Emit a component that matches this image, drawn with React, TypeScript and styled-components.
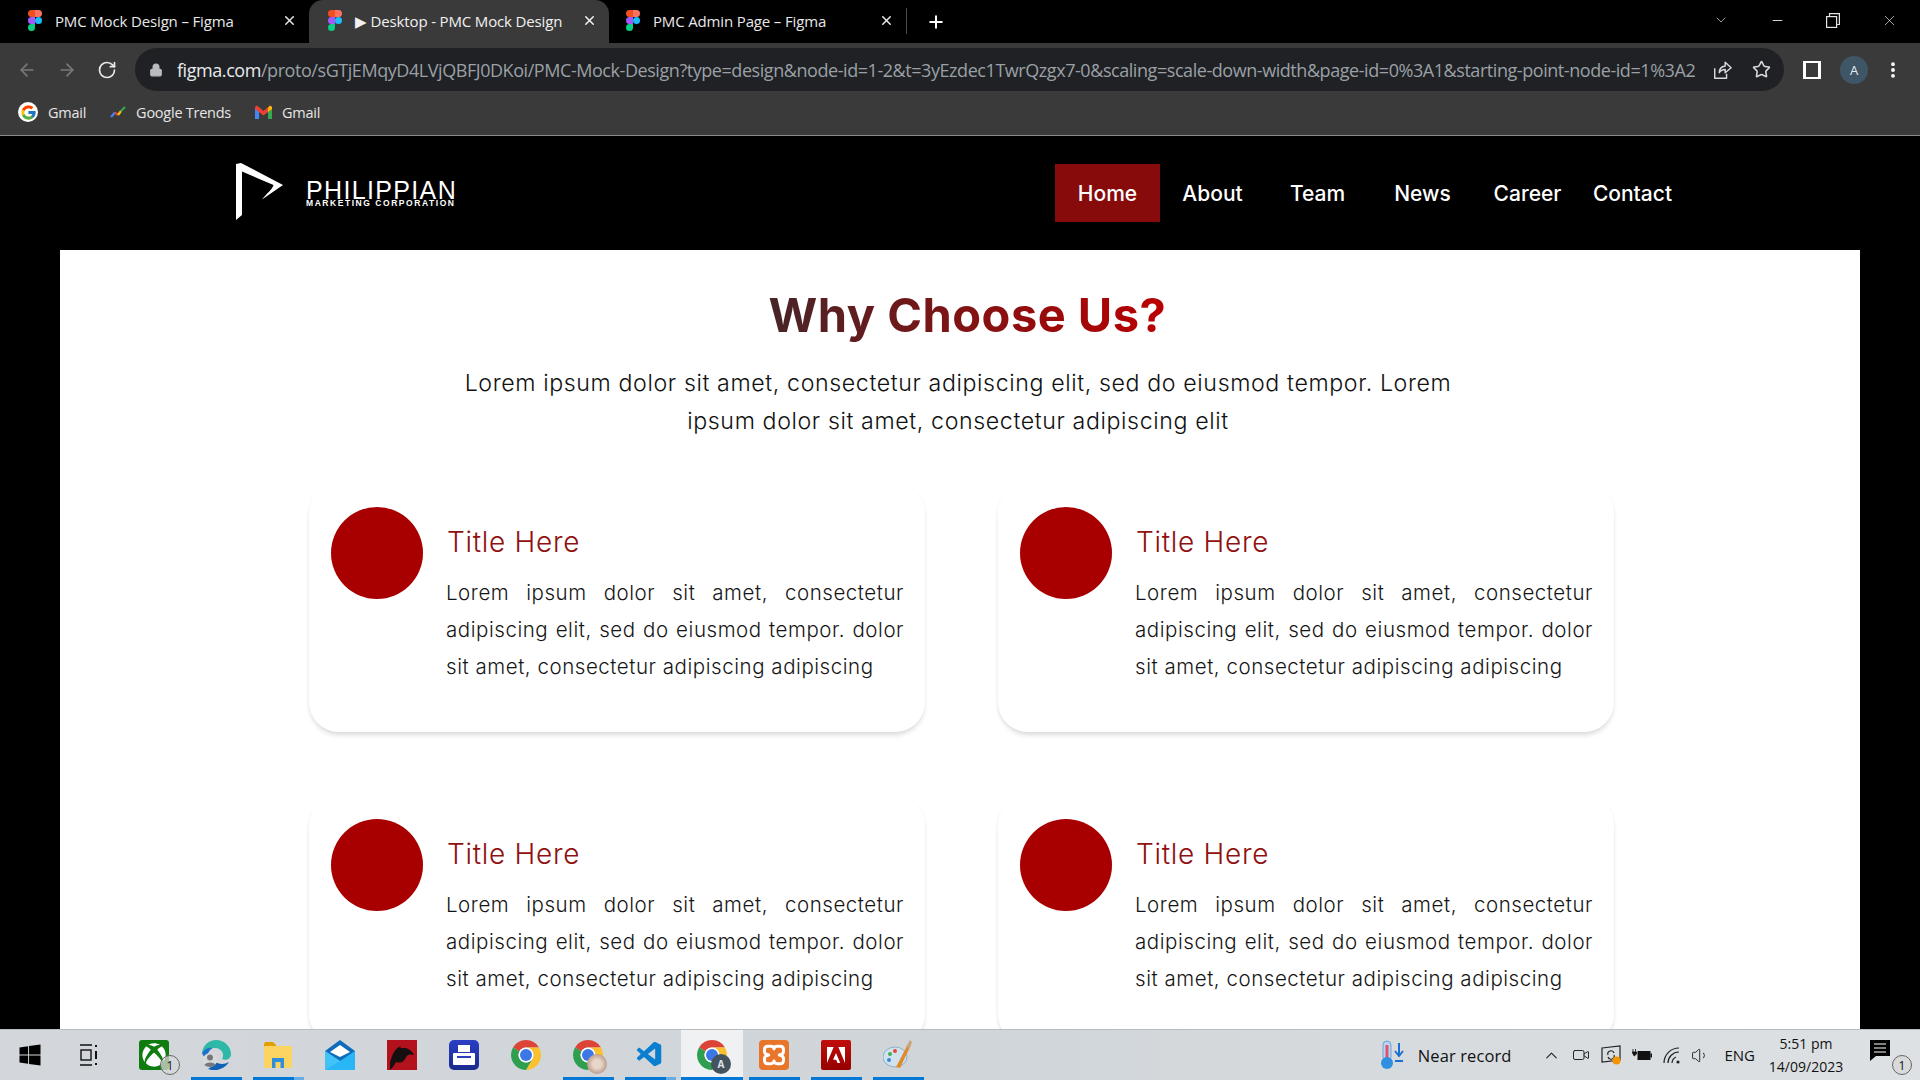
import React from "react";
import styled, { createGlobalStyle } from "styled-components";
import {
  ArrowLeft,
  ArrowRight,
  ChevronDown,
  ChevronUp,
  Lock,
  Minus,
  MoreVertical,
  Plus,
  RotateCw,
  Star,
  Video,
  Volume1,
  X,
} from "lucide-react";
import { FaWindows, FaXbox } from "react-icons/fa";
import { FcGoogle } from "react-icons/fc";
import { SiAdobe } from "react-icons/si";
import { VscVscode } from "react-icons/vsc";

const GlobalStyle = createGlobalStyle`
  html, body {
    margin: 0;
    padding: 0;
    height: 100%;
    overflow: hidden;
    background: #000;
  }
  * {
    box-sizing: border-box;
  }
`;

const Screen = styled.div`
  width: 1920px;
  height: 1080px;
  display: flex;
  flex-direction: column;
  overflow: hidden;
  font-family: "Open Sans", "Liberation Sans", sans-serif;
`;

/* browser chrome */
const TabStrip = styled.div`
  height: 43px;
  flex: none;
  display: flex;
  background: #000;
  color: #fff;
`;

const Tab = styled.div<{ $active?: boolean; $width: number; $inset: number }>`
  width: ${(p) => p.$width}px;
  height: 43px;
  display: flex;
  align-items: center;
  padding: 0 12px 2px ${(p) => p.$inset}px;
  font-size: 15px;
  letter-spacing: -0.15px;
  background: ${(p) => (p.$active ? "#3a3a3a" : "transparent")};
  border-radius: ${(p) => (p.$active ? "14px 14px 0 0" : "0")};
  color: ${(p) => (p.$active ? "#f1f1f1" : "#e8e8e8")};
`;

const TabTitle = styled.span`
  flex: 1;
  margin-left: 13px;
  white-space: nowrap;
`;

const Divider = styled.div`
  width: 1px;
  height: 26px;
  margin: 8px 0 0 0;
  background: #4a4a4a;
`;

const NewTab = styled.div`
  width: 58px;
  display: flex;
  align-items: center;
  justify-content: center;
`;

const WindowControls = styled.div`
  margin-left: auto;
  display: flex;
  align-items: center;
  padding: 0 22px 3px 0;
  gap: 41px;
  color: #e4e4e4;
`;

const Toolbar = styled.div`
  height: 54px;
  flex: none;
  display: flex;
  align-items: center;
  background: #3a3a3a;
  padding: 5px 0 6px 17px;
  color: #b9bcc0;
`;

const NavIcons = styled.div`
  width: 118px;
  display: flex;
  gap: 20px;
`;

const AddressBar = styled.div`
  width: 1649px;
  height: 43px;
  display: flex;
  align-items: center;
  border-radius: 22px;
  background: #202124;
  padding: 0 13px 0 14px;
`;

const Url = styled.div`
  margin-left: 14px;
  width: 1518px;
  overflow: hidden;
  white-space: nowrap;
  font-size: 18px;
  letter-spacing: -0.44px;
  color: #9aa0a6;
  & b {
    font-weight: 400;
    color: #e8eaed;
  }
`;

const BarActions = styled.div`
  margin-left: 17px;
  display: flex;
  gap: 20px;
  color: #d7d9dc;
`;

const ProfileActions = styled.div`
  display: flex;
  align-items: center;
  margin-left: 19px;
  color: #fff;
`;

const PanelIcon = styled.div`
  width: 18px;
  height: 18px;
  border: 2px solid #fff;
  border-left-width: 3px;
  border-right-width: 3px;
  background: #3a3a3a;
`;

const Avatar = styled.div`
  width: 28px;
  height: 28px;
  margin-left: 19px;
  border-radius: 50%;
  background: #3e5666;
  display: flex;
  align-items: center;
  justify-content: center;
  font-size: 13px;
  color: #e6edf2;
`;

const MenuDots = styled.div`
  margin-left: 15px;
  display: flex;
`;

const Bookmarks = styled.div`
  height: 39px;
  flex: none;
  display: flex;
  align-items: center;
  background: #3a3a3a;
  border-bottom: 1px solid #8a8a8a;
  padding: 0 0 8px 18px;
  font-size: 14.5px;
  letter-spacing: -0.25px;
  color: #e6e6e6;
`;

const Bookmark = styled.div`
  display: flex;
  align-items: center;
  gap: 10px;
  margin-right: 24px;
`;

const GoogleDisc = styled.div`
  width: 20px;
  height: 20px;
  border-radius: 50%;
  background: #fff;
  display: flex;
  align-items: center;
  justify-content: center;
`;

/* the page in the browser */
const Viewport = styled.div`
  flex: 1;
  min-height: 0;
  overflow: hidden;
  background: #000;
`;

const SiteHeader = styled.header`
  height: 114px;
  display: flex;
  align-items: flex-start;
  padding: 27px 235px 0 236px;
`;

const Logo = styled.div`
  display: flex;
  align-items: flex-start;
  gap: 22px;
  color: #fff;
`;

const LogoWords = styled.div`
  padding-top: 17px;
  display: flex;
  flex-direction: column;
  font-family: "Liberation Sans", Arial, sans-serif;
`;

const LogoName = styled.span`
  font-size: 25px;
  line-height: 20px;
  letter-spacing: 1.35px;
`;

const LogoSub = styled.span`
  margin-top: -1px;
  font-size: 8.5px;
  line-height: 8px;
  font-weight: 700;
  letter-spacing: 1.55px;
  white-space: nowrap;
`;

const SiteNav = styled.nav`
  margin-left: auto;
  margin-top: 1px;
  display: grid;
  grid-template-columns: repeat(6, 105px);
`;

const NavLink = styled.a<{ $active?: boolean }>`
  height: 58px;
  display: flex;
  align-items: center;
  justify-content: center;
  font-family: Inter, "Liberation Sans", sans-serif;
  font-size: 21px;
  font-weight: 500;
  color: #fff;
  background: ${(p) => (p.$active ? "#860b0a" : "transparent")};
`;

const Panel = styled.main`
  margin: 0 60px;
  background: #fff;
  padding-top: 37px;
  min-height: 900px;
  font-family: Inter, "Liberation Sans", sans-serif;
`;

const Heading = styled.h1`
  margin: 0;
  padding-left: 15px;
  text-align: center;
  font-size: 47px;
  line-height: 56px;
  font-weight: 700;
  letter-spacing: 0.5px;
`;

const GradientText = styled.span`
  background: linear-gradient(90deg, #472527 0%, #bb0000 100%);
  -webkit-background-clip: text;
  background-clip: text;
  color: transparent;
`;

const Lead = styled.p`
  width: 1020px;
  margin: 22px auto 0;
  padding-right: 4px;
  text-align: center;
  font-size: 23.2px;
  font-weight: 360;
  line-height: 37.5px;
  letter-spacing: 0.6px;
  color: #111;
`;

const CardGrid = styled.div`
  margin-top: 43px;
  padding-left: 249px;
  display: grid;
  grid-template-columns: repeat(2, 616px);
  column-gap: 73px;
  row-gap: 63px;
`;

const Card = styled.article`
  display: grid;
  grid-template-columns: 92px 1fr;
  column-gap: 24px;
  height: 249px;
  padding: 24px 21px 0 22px;
  border-radius: 30px;
  background: #fff;
  box-shadow: 0 4px 5px -1px rgba(0, 0, 0, 0.14), 0 0 4px rgba(0, 0, 0, 0.02);
`;

const Dot = styled.div`
  width: 92px;
  height: 92px;
  border-radius: 50%;
  background: #a80000;
`;

const CardTitle = styled.h2`
  margin: 18px 0 0;
  font-size: 28px;
  line-height: 34px;
  font-weight: 300;
  letter-spacing: 0.7px;
  color: #8f1010;
`;

const CardText = styled.p`
  margin: 14.5px 0 0 -1px;
  font-size: 20.5px;
  font-weight: 360;
  line-height: 37.4px;
  letter-spacing: 0.55px;
  text-align: justify;
  color: #151515;
`;

/* windows taskbar */
const Taskbar = styled.footer`
  height: 51px;
  flex: none;
  display: flex;
  align-items: stretch;
  background: linear-gradient(90deg, #d3d7db 0%, #d0d5d9 50%, #dde1e4 100%);
  border-top: 1px solid #b9bcbf;
  color: #111;
`;

const StartSlot = styled.div`
  width: 59px;
  display: flex;
  align-items: center;
  justify-content: center;
  color: #000;
`;

const TaskViewSlot = styled(StartSlot)`
  margin-right: 5px;
`;

const TaskSlot = styled.div<{ $running?: boolean; $focus?: boolean; $stack?: boolean }>`
  position: relative;
  width: 62px;
  display: flex;
  align-items: center;
  justify-content: center;
  background: ${(p) => (p.$focus ? "#f0f1f2" : "transparent")};

  &::after {
    content: "";
    display: ${(p) => (p.$running ? "block" : "none")};
    position: absolute;
    left: ${(p) => (p.$focus ? "0" : "6px")};
    right: ${(p) => (p.$focus ? "0" : "5px")};
    bottom: 0;
    height: 3px;
    background: ${(p) =>
      p.$stack
        ? "linear-gradient(90deg, #0078d7 0 80%, #66ade6 80%)"
        : "#0078d7"};
  }
`;

const IconBox = styled.div`
  position: relative;
  width: 30px;
  height: 30px;
  display: flex;
  align-items: center;
  justify-content: center;
`;

const XboxTile = styled(IconBox)`
  background: #107c10;
  border-radius: 3px;
  color: #fff;
`;

const ScanTile = styled(IconBox)`
  background: linear-gradient(180deg, #2b3fc4, #1a2a8c);
  border-radius: 5px;
`;

const XamppTile = styled(IconBox)`
  background: #e8752a;
  border-radius: 4px;
`;

const AcrobatTile = styled(IconBox)`
  background: linear-gradient(180deg, #c00d0d, #960000);
  border-radius: 2px;
  color: #fff;
`;

const CountBadge = styled.div`
  position: absolute;
  right: -11px;
  bottom: -5px;
  width: 20px;
  height: 20px;
  border-radius: 50%;
  border: 1px solid #666;
  background: rgba(215, 215, 215, 0.75);
  display: flex;
  align-items: center;
  justify-content: center;
  font-size: 12px;
  color: #111;
`;

const ProfileBadge = styled.div<{ $photo?: boolean }>`
  position: absolute;
  right: -4px;
  bottom: -4px;
  width: 20px;
  height: 20px;
  border-radius: 50%;
  background: ${(p) =>
    p.$photo ? "radial-gradient(circle, #e8d6c8 30%, #9a7464 100%)" : "#44535f"};
  color: #dfe6ea;
  font-size: 10px;
  font-weight: 700;
  display: flex;
  align-items: center;
  justify-content: center;
`;

const Tray = styled.div`
  margin-left: auto;
  display: flex;
  align-items: center;
  padding-right: 19px;
`;

const Weather = styled.div`
  display: flex;
  align-items: center;
  gap: 14px;
  font-size: 16.5px;
  letter-spacing: 0.1px;
  margin-right: 31px;
  white-space: nowrap;
`;

const TrayIcons = styled.div`
  display: flex;
  align-items: center;
  gap: 11px;
  color: #222;
`;

const Lang = styled.div`
  margin-left: 14px;
  font-size: 15px;
`;

const Clock = styled.div`
  width: 100px;
  margin-left: 1px;
  display: flex;
  flex-direction: column;
  align-items: center;
  font-size: 14px;
  line-height: 23px;
  white-space: nowrap;
`;

const Notify = styled.div`
  position: relative;
  margin-left: 14px;
  width: 31px;
  height: 30px;
`;

const FigmaIcon = () => (
  <svg width="14" height="21" viewBox="0 0 14 21">
    <path d="M0 3.5A3.5 3.5 0 0 1 3.5 0H7v7H3.5A3.5 3.5 0 0 1 0 3.5Z" fill="#f24e1e" />
    <path d="M7 0h3.5a3.5 3.5 0 0 1 0 7H7Z" fill="#ff7262" />
    <path d="M0 10.5A3.5 3.5 0 0 1 3.5 7H7v7H3.5A3.5 3.5 0 0 1 0 10.5Z" fill="#a259ff" />
    <circle cx="10.5" cy="10.5" r="3.5" fill="#1abcfe" />
    <path d="M0 17.5A3.5 3.5 0 0 1 3.5 14H7v3.5a3.5 3.5 0 0 1-7 0Z" fill="#0acf83" />
  </svg>
);

const RestoreIcon = () => (
  <svg width="14" height="15" viewBox="0 0 14 15" fill="none" stroke="currentColor" strokeWidth="1.2">
    <rect x="0.6" y="3.6" width="10" height="10.8" />
    <path d="M3.5 3.5V0.6H13.4V11.5H10.6" />
  </svg>
);

const ShareIcon = () => (
  <svg width="20" height="20" viewBox="0 0 22 22" fill="none" stroke="currentColor" strokeWidth="1.6" strokeLinejoin="round">
    <path d="M3 9V20H16V15" />
    <path d="M8 14C8 9 11 7 14.5 6.5V2.5L21 8.5L14.5 14V10.5C12 10.5 9.5 11.5 8 14Z" />
  </svg>
);

const LogoMark = () => (
  <svg width="48" height="58" viewBox="0 0 48 58">
    <path
      d="M0 1L5 0L47 22L26 36.5C31 30 36 27 37.5 22L6 8.5V52L0 57Z"
      fill="#fff"
    />
  </svg>
);

const ChromeIcon = () => (
  <svg width="30" height="30" viewBox="4 4 40 40">
    <path d="M24 4A20 20 0 0 1 41.32 14H24A10 10 0 0 0 15.34 19L6.68 14A20 20 0 0 1 24 4Z" fill="#db4437" />
    <path d="M41.32 14A20 20 0 0 1 24 44L32.66 29A10 10 0 0 0 24 14H41.32Z" fill="#fbc02d" />
    <path d="M24 44A20 20 0 0 1 6.68 14L15.34 19A10 10 0 0 0 32.66 29Z" fill="#2e9e4f" />
    <circle cx="24" cy="24" r="10" fill="#fff" />
    <circle cx="24" cy="24" r="8" fill="#3b78e7" />
  </svg>
);

const TrendsIcon = () => (
  <svg width="16" height="14" viewBox="0 0 16 14" fill="none" strokeWidth="2.2">
    <path d="M1 12L5 7.5" stroke="#4285f4" />
    <path d="M5 7.5L8 10" stroke="#ea4335" />
    <path d="M8 10L11 6" stroke="#fbbc04" />
    <path d="M11 6L15 2" stroke="#34a853" />
  </svg>
);

const GmailIcon = () => (
  <svg width="17" height="14" viewBox="0 0 17 14">
    <path d="M0 2V14H4V6Z" fill="#4285f4" />
    <path d="M17 2V14H13V6Z" fill="#34a853" />
    <path d="M0 2L2 0.5L8.5 6L15 0.5L17 2V4L8.5 10.5L0 4Z" fill="#ea4335" />
    <path d="M15 0.5L17 2V4L13 7V3Z" fill="#fbbc04" />
  </svg>
);

const EdgeIcon = () => (
  <svg width="30" height="30" viewBox="0 0 30 30">
    <path d="M1 13C2 5 8 0 15 0C24 0 30 7 30 14C30 19 25 21 21 19C24 15 21 8 14 8C8 8 3 10 1 13Z" fill="#2fb8a8" />
    <path d="M1 13C3 9 8 7 12 8C8 10 6 14 7 18C4 18 2 16 1 13Z" fill="#1b73c8" />
    <path d="M7 29C14 32 24 29 28 22C23 25 17 24 14 22C13 25 10 27 7 29Z" fill="#0f62b5" />
    <circle cx="9" cy="20" r="7" fill="#d7d9dc" />
    <circle cx="9" cy="17.5" r="3" fill="#777" />
    <path d="M3.5 25C4 21.5 14 21.5 14.5 25C12 27.5 6 27.5 3.5 25Z" fill="#777" />
  </svg>
);

const FilesIcon = () => (
  <svg width="28" height="28" viewBox="0 0 28 28">
    <path d="M0 5V2.5L1.5 1H9L12 4V7H0Z" fill="#e0a100" />
    <rect x="0" y="5" width="28" height="22" rx="1" fill="#fcd462" />
    <path d="M8 27V17H20V27H16.5V21H11.5V27Z" fill="#2f8fdc" />
  </svg>
);

const MailIcon = () => (
  <svg width="30" height="30" viewBox="0 0 30 30">
    <path d="M0 11L15 0L30 11V30H0Z" fill="#0f6cbd" />
    <path d="M5 12L15 5L25 12L15 17Z" fill="#fff" />
    <path d="M0 11L15 21L30 11V30H0Z" fill="#29b6f6" />
    <path d="M0 11L15 21L0 30Z" fill="#42c3f7" />
  </svg>
);

const MsiIcon = () => (
  <svg width="30" height="30" viewBox="0 0 30 30">
    <rect width="30" height="30" fill="#b3121d" />
    <path d="M3 23C5 15 7 9 14 6C12 8 14 8 18 8C21 8 25 11 27 15C23 14 21 14 19 17C18 20 15 24 9 22C7 26 5 28 3 30Z" fill="#15100f" />
  </svg>
);

const ScanIcon = () => (
  <svg width="22" height="20" viewBox="0 0 22 20" fill="#fff">
    <rect x="5" y="0" width="12" height="7" />
    <rect x="0" y="8" width="22" height="12" rx="1" />
    <rect x="4" y="11" width="14" height="2" fill="#2b3fc4" />
  </svg>
);

const XamppIcon = () => (
  <svg width="26" height="26" viewBox="0 0 30 30" fill="none" stroke="#fff" strokeWidth="3.4" strokeLinejoin="round">
    <path d="M8 5h3q4 0 4 3q0-3 4-3h3q4 0 4 4v2q0 3-5 4q5 1 5 4v2q0 4-4 4h-3q-4 0-4-3q0 3-4 3h-3q-4 0-4-4v-2q0-3 5-4q-5-1-5-4v-2q0-4 4-4Z" />
  </svg>
);

const PaintIcon = () => (
  <svg width="30" height="30" viewBox="0 0 30 30">
    <ellipse cx="12" cy="17" rx="12" ry="10" fill="#cfe2ee" stroke="#8eb0c6" />
    <circle cx="7" cy="14" r="2" fill="#46b04a" />
    <circle cx="12" cy="11" r="2" fill="#e2483b" />
    <circle cx="6" cy="20" r="2" fill="#3a87d8" />
    <path d="M13 27L24 6L27 7L17 28Z" fill="#e08a2c" />
    <path d="M23 7L27 0L29 2L27 8Z" fill="#c9a77a" />
  </svg>
);

const ThermoIcon = () => (
  <svg width="24" height="30" viewBox="0 0 24 30">
    <rect x="3" y="1" width="8" height="20" rx="4" fill="#b9d3ee" stroke="#6aa5dc" />
    <rect x="5.5" y="5" width="3" height="14" fill="#e2536a" />
    <circle cx="7" cy="23" r="6" fill="#2f8fe0" />
    <path d="M19 3V15M15 11L19 16L23 11" stroke="#1c6fd1" strokeWidth="2" fill="none" />
    <rect x="15" y="20" width="8" height="2" fill="#1c6fd1" />
  </svg>
);

const BackupIcon = () => (
  <svg width="20" height="20" viewBox="0 0 20 20" fill="none" stroke="#222" strokeWidth="1.2">
    <path d="M1 3L19 1V15L1 17Z" />
    <path d="M7 10A3 3 0 0 1 13 8M13 10A3 3 0 0 1 7 12" />
    <circle cx="15.5" cy="15.5" r="4" fill="#f59300" stroke="none" />
  </svg>
);

const BatteryIcon = () => (
  <svg width="20" height="12" viewBox="0 0 20 12">
    <path d="M1 0V3M3.5 0V3M0 3H4.5V5L2.2 7Z" fill="#111" stroke="#111" strokeWidth="0.8" />
    <rect x="5.5" y="2" width="13" height="9" fill="#111" />
    <rect x="18.5" y="4.5" width="1.5" height="4" fill="#111" />
  </svg>
);

const WifiIcon = () => (
  <svg width="17" height="17" viewBox="0 0 17 17" fill="none" stroke="#222" strokeWidth="1.2">
    <path d="M1 16A15 15 0 0 1 16 1" />
    <path d="M5 16A11 11 0 0 1 16 5" />
    <path d="M9 16A7 7 0 0 1 13 10" />
    <circle cx="15" cy="15" r="1.6" fill="#222" stroke="none" />
  </svg>
);

const NotifyIcon = () => (
  <svg width="20" height="22" viewBox="0 0 20 22">
    <path d="M0 0H20V16H6L0 21Z" fill="#000" />
    <path d="M4 4H16M4 8H16M4 12H16" stroke="#fff" />
  </svg>
);

const LOREM =
  "Lorem ipsum dolor sit amet, consectetur adipiscing elit, sed do eiusmod tempor. dolor sit amet, consectetur adipiscing adipiscing";

const navItems = ["Home", "About", "Team", "News", "Career", "Contact"];
const tabClose = <X size={15} strokeWidth={2.4} />;

export default function App() {
  return (
    <Screen>
      <GlobalStyle />
      <TabStrip>
        <Tab $width={309} $inset={28}>
          <FigmaIcon />
          <TabTitle>PMC Mock Design – Figma</TabTitle>
          {tabClose}
        </Tab>
        <Tab $active $width={300} $inset={19}>
          <FigmaIcon />
          <TabTitle>▶ Desktop - PMC Mock Design</TabTitle>
          {tabClose}
        </Tab>
        <Tab $width={297} $inset={17}>
          <FigmaIcon />
          <TabTitle>PMC Admin Page – Figma</TabTitle>
          {tabClose}
        </Tab>
        <Divider />
        <NewTab>
          <Plus size={20} strokeWidth={2.4} />
        </NewTab>
        <WindowControls>
          <ChevronDown size={16} strokeWidth={1} />
          <Minus size={15} strokeWidth={1.5} />
          <RestoreIcon />
          <X size={17} strokeWidth={1} />
        </WindowControls>
      </TabStrip>

      <Toolbar>
        <NavIcons>
          <ArrowLeft size={20} color="#77797c" />
          <ArrowRight size={20} color="#77797c" />
          <RotateCw size={20} color="#e8eaed" />
        </NavIcons>
        <AddressBar>
          <Lock size={14} fill="#b9bcc0" />
          <Url>
            <b>figma.com</b>
            /proto/sGTjEMqyD4LVjQBFJ0DKoi/PMC-Mock-Design?type=design&amp;node-id=1-2&amp;t=3yEzdec1TwrQzgx7-0&amp;scaling=scale-down-width&amp;page-id=0%3A1&amp;starting-point-node-id=1%3A2
          </Url>
          <BarActions>
            <ShareIcon />
            <Star size={19} />
          </BarActions>
        </AddressBar>
        <ProfileActions>
          <PanelIcon />
          <Avatar>A</Avatar>
          <MenuDots>
            <MoreVertical size={20} strokeWidth={2.6} />
          </MenuDots>
        </ProfileActions>
      </Toolbar>

      <Bookmarks>
        <Bookmark>
          <GoogleDisc>
            <FcGoogle size={17} />
          </GoogleDisc>
          Gmail
        </Bookmark>
        <Bookmark>
          <TrendsIcon />
          Google Trends
        </Bookmark>
        <Bookmark>
          <GmailIcon />
          Gmail
        </Bookmark>
      </Bookmarks>

      <Viewport>
        <SiteHeader>
          <Logo>
            <LogoMark />
            <LogoWords>
              <LogoName>PHILIPPIAN</LogoName>
              <LogoSub>MARKETING CORPORATION</LogoSub>
            </LogoWords>
          </Logo>
          <SiteNav>
            {navItems.map((item) => (
              <NavLink key={item} $active={item === "Home"}>
                {item}
              </NavLink>
            ))}
          </SiteNav>
        </SiteHeader>

        <Panel>
          <Heading>
            <GradientText>Why Choose Us?</GradientText>
          </Heading>
          <Lead>
            Lorem ipsum dolor sit amet, consectetur adipiscing elit, sed do eiusmod tempor. Lorem
            ipsum dolor sit amet, consectetur adipiscing elit
          </Lead>
          <CardGrid>
            {Array.from({ length: 4 }, (v, i) => (
              <Card key={`card-${i}`}>
                <Dot />
                <div>
                  <CardTitle>Title Here</CardTitle>
                  <CardText>{LOREM}</CardText>
                </div>
              </Card>
            ))}
          </CardGrid>
        </Panel>
      </Viewport>

      <Taskbar>
        <StartSlot>
          <FaWindows size={24} />
        </StartSlot>
        <TaskViewSlot>
          <svg width="20" height="24" viewBox="0 0 20 24" fill="none" stroke="#111" strokeWidth="1.4">
            <path d="M1 2H13M1 22H13" />
            <rect x="2" y="7" width="10" height="10" />
            <path d="M17 2V4M17 8V16M17 20V22" strokeWidth="2" />
          </svg>
        </TaskViewSlot>
        <TaskSlot>
          <XboxTile>
            <FaXbox size={24} />
            <CountBadge>1</CountBadge>
          </XboxTile>
        </TaskSlot>
        <TaskSlot $running>
          <IconBox>
            <EdgeIcon />
          </IconBox>
        </TaskSlot>
        <TaskSlot $running $stack>
          <IconBox>
            <FilesIcon />
          </IconBox>
        </TaskSlot>
        <TaskSlot>
          <IconBox>
            <MailIcon />
          </IconBox>
        </TaskSlot>
        <TaskSlot>
          <IconBox>
            <MsiIcon />
          </IconBox>
        </TaskSlot>
        <TaskSlot>
          <ScanTile>
            <ScanIcon />
          </ScanTile>
        </TaskSlot>
        <TaskSlot>
          <IconBox>
            <ChromeIcon />
          </IconBox>
        </TaskSlot>
        <TaskSlot $running>
          <IconBox>
            <ChromeIcon />
            <ProfileBadge $photo />
          </IconBox>
        </TaskSlot>
        <TaskSlot $running $stack>
          <IconBox>
            <VscVscode size={30} color="#0a7fd0" />
          </IconBox>
        </TaskSlot>
        <TaskSlot $running $focus>
          <IconBox>
            <ChromeIcon />
            <ProfileBadge>A</ProfileBadge>
          </IconBox>
        </TaskSlot>
        <TaskSlot $running>
          <XamppTile>
            <XamppIcon />
          </XamppTile>
        </TaskSlot>
        <TaskSlot $running>
          <AcrobatTile>
            <SiAdobe size={18} />
          </AcrobatTile>
        </TaskSlot>
        <TaskSlot $running>
          <IconBox>
            <PaintIcon />
          </IconBox>
        </TaskSlot>

        <Tray>
          <Weather>
            <ThermoIcon />
            Near record
          </Weather>
          <TrayIcons>
            <ChevronUp size={19} strokeWidth={1.4} />
            <Video size={18} strokeWidth={1.3} />
            <BackupIcon />
            <BatteryIcon />
            <WifiIcon />
            <Volume1 size={19} strokeWidth={1.2} />
          </TrayIcons>
          <Lang>ENG</Lang>
          <Clock>
            <span>5:51 pm</span>
            <span>14/09/2023</span>
          </Clock>
          <Notify>
            <NotifyIcon />
            <CountBadge>1</CountBadge>
          </Notify>
        </Tray>
      </Taskbar>
    </Screen>
  );
}
